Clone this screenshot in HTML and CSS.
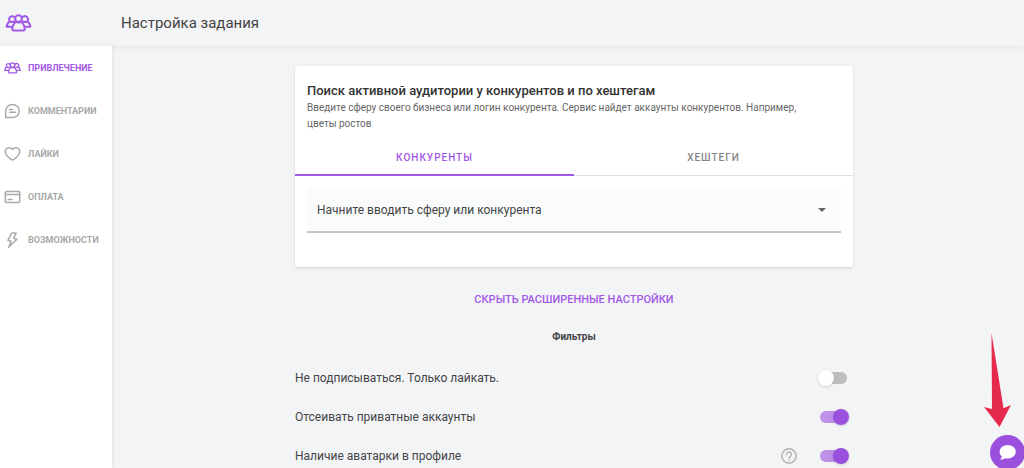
FILE: index.html
```html
<!DOCTYPE html>
<html lang="ru">
<head>
<meta charset="utf-8">
<meta name="viewport" content="width=device-width, initial-scale=1">
<title>Настройка задания</title>
<link rel="stylesheet" href="styles.css">
</head>
<body>
<svg class="sprite" aria-hidden="true">
  <symbol id="people" viewBox="0 0 26 18">
    <circle cx="13" cy="4.600" r="3.400"/>
    <path d="M8.300 16.600c-1.300 0-1.700-.8-1.500-2 .5-3.600 2.200-5.900 4.100-6.700 1.300.8 2.900.8 4.200 0 1.900.8 3.600 3.100 4.100 6.700.2 1.200-.2 2-1.500 2z"/>
    <path d="M9 3.200A2.900 2.900 0 1 0 4.400 7.300C2.700 8.200 1.500 10 1.100 12.700h5.300M17 3.200a2.900 2.900 0 1 1 4.600 4.100c1.700.9 2.900 2.700 3.300 5.400h-5.300M4.400 7.300c1.200.8 2.700.9 4 .2M21.600 7.300c-1.200.8-2.700.9-4 .2"/>
  </symbol>
</svg>
<header class="header">
  <a class="logo" href="#" aria-label="Главная"><svg class="logo-icon"><use href="#people"/></svg></a>
  <h1 class="page-title">Настройка задания</h1>
</header>
<div class="layout">
  <nav class="sidebar">
    <a class="nav-link active" href="#"><svg class="nav-icon"><use href="#people"/></svg>ПРИВЛЕЧЕНИЕ</a>
    <a class="nav-link" href="#"><svg class="nav-icon" viewBox="0 0 16 16"><path d="M1.200 14.600V8A6.800 6.600 0 1 1 8 14.600zM5 6.500h3M5 9.300h6"/></svg>КОММЕНТАРИИ</a>
    <a class="nav-link" href="#"><svg class="nav-icon" viewBox="0 0 16 16"><path d="M8 14.200C6.300 13.200.8 9.300.8 5.500.8 1.700 5.700.3 8 3.500c2.300-3.200 7.200-1.800 7.200 2 0 3.800-5.500 7.700-7.200 8.700z"/></svg>ЛАЙКИ</a>
    <a class="nav-link" href="#"><svg class="nav-icon" viewBox="0 0 16 16"><rect x=".8" y="2.600" width="14.400" height="10.800" rx="1.200"/><path d="M1 5.500h14M3.500 10.500h4"/></svg>ОПЛАТА</a>
    <a class="nav-link" href="#"><svg class="nav-icon" viewBox="0 0 16 16"><path d="M7.300 1 3.400 8.300l3.300.9-2.500 6L12.400 7.300l-3.300-.9L11.600.9z"/></svg>ВОЗМОЖНОСТИ</a>
  </nav>
  <main class="main">
    <section class="card">
      <div class="card-head">
        <h2 class="card-title">Поиск активной аудитории у конкурентов и по хештегам</h2>
        <p class="card-text">Введите сферу своего бизнеса или логин конкурента. Сервис найдет аккаунты конкурентов. Например, цветы ростов</p>
      </div>
      <div class="tabs" role="tablist">
        <button class="tab selected" type="button" role="tab" aria-selected="true">КОНКУРЕНТЫ</button>
        <button class="tab" type="button" role="tab" aria-selected="false">ХЕШТЕГИ</button>
      </div>
      <div class="field">
        <select class="select" aria-label="Сфера или конкурент">
          <option>Начните вводить сферу или конкурента</option>
        </select>
        <svg class="caret" viewBox="0 0 8 4" aria-hidden="true"><path d="M0 0h8L4 4z"/></svg>
      </div>
    </section>
    <button class="toggle-settings" type="button">СКРЫТЬ РАСШИРЕННЫЕ НАСТРОЙКИ</button>
    <h3 class="filters-title">Фильтры</h3>
    <div class="filter">
      <label class="filter-label" for="only-like">Не подписываться. Только лайкать.</label>
      <input class="switch" type="checkbox" id="only-like">
    </div>
    <div class="filter">
      <label class="filter-label" for="private">Отсеивать приватные аккаунты</label>
      <input class="switch" type="checkbox" id="private" checked>
    </div>
    <div class="filter">
      <label class="filter-label" for="avatar">Наличие аватарки в профиле</label>
      <button class="help" type="button" aria-label="Справка"><svg class="help-icon" viewBox="0 0 16 16"><circle cx="8" cy="8" r="7.200"/><path d="M5.600 6.400a2.400 2.400 0 1 1 3.800 1.900C8.500 8.900 8 9.300 8 10.300M8 12.300v.3"/></svg></button>
      <input class="switch" type="checkbox" id="avatar" checked>
    </div>
  </main>
</div>
<svg class="arrow" viewBox="0 0 28 94" aria-hidden="true"><path d="M7.500 0 19.500 75.300 27 72 15.500 94 0 74 8 76z"/></svg>
<button class="chat" type="button" aria-label="Чат"><svg class="chat-icon" viewBox="0 0 16 14"><path d="M8.200 0C3.900 0 .6 2.800.6 6.300c0 1.900.9 3.500 2.300 4.700-.4 1.100-1.200 1.900-2.300 2.500 1.900.3 3.700-.2 5-1.200.8.200 1.700.3 2.600.3 4.300 0 7.600-2.800 7.600-6.300S12.500 0 8.200 0z"/></svg></button>
</body>
</html>
```
FILE: styles.css
```css
* {
  box-sizing: border-box;
}

html {
  height: 100%;
}

body {
  display: flex;
  flex-direction: column;
  height: 100%;
  margin: 0;
  overflow: hidden;
  background: #f3f4f6;
  color: #444446;
  font-family: Roboto, "Liberation Sans", sans-serif;
  font-size: 12px;
}

h1,
h2,
h3,
p {
  margin: 0;
}

button,
select {
  border: 0;
  background: none;
  color: inherit;
  font: inherit;
  cursor: pointer;
}

.sprite {
  position: absolute;
  width: 0;
  height: 0;
}

.header {
  display: flex;
  flex: none;
  align-items: center;
  height: 46px;
  padding: 0 5px;
  box-shadow: 0 0 5px rgba(0, 0, 0, 0.1);
}

.logo {
  display: flex;
  width: 116px;
  color: #a259e6;
}

.logo-icon,
.nav-icon,
.help-icon {
  fill: none;
  stroke: currentColor;
  stroke-width: 1.5;
  stroke-linecap: round;
  stroke-linejoin: round;
}

.logo-icon {
  width: 27px;
  height: 18px;
  stroke-width: 2;
}

.page-title {
  font-size: 15px;
  font-weight: 400;
  line-height: 18px;
}

.layout {
  display: flex;
  flex: 1;
  gap: 12px;
  min-height: 0;
}

.sidebar {
  flex: none;
  width: 112px;
  background: #fff;
  box-shadow: 1px 0 3px rgba(0, 0, 0, 0.08);
}

.nav-link {
  display: flex;
  align-items: center;
  gap: 7px;
  height: 43px;
  padding-left: 4px;
  color: #a9a9a9;
  font-size: 9px;
  font-weight: 700;
  text-decoration: none;
  white-space: nowrap;
}

.nav-link.active {
  color: #a259e6;
}

.nav-icon {
  flex: none;
  width: 17px;
  height: 16px;
}

.nav-link.active .nav-icon {
  stroke-width: 2;
}

.main {
  display: flex;
  flex: 1;
  flex-direction: column;
  max-width: 558px;
  margin: 0 auto;
  padding-top: 20px;
}

.card {
  flex: none;
  padding-bottom: 34px;
  border-radius: 3px;
  background: #fff;
  box-shadow: 0 1px 3px rgba(0, 0, 0, 0.14);
}

.card-head {
  padding: 16px 28px 0 12px;
}

.card-title {
  font-size: 13px;
  font-weight: 500;
  line-height: 18px;
  color: #333;
}

.card-text {
  font-size: 10px;
  line-height: 16px;
  color: #666;
}

.tabs {
  display: flex;
  margin-top: 8px;
  border-bottom: 1px solid #e0e0e2;
}

.tab {
  flex: 1;
  height: 36px;
  margin-bottom: -1px;
  padding: 0;
  border-bottom: 2px solid transparent;
  color: #858585;
  font-size: 10px;
  font-weight: 500;
  letter-spacing: 1px;
}

.tab.selected {
  border-color: #a259e6;
  color: #a259e6;
}

.field {
  position: relative;
  margin: 12px 12px 0;
}

.select {
  display: block;
  width: 100%;
  height: 45px;
  padding: 0 30px 0 10px;
  border-bottom: 2px solid #c4c6c5;
  border-radius: 0;
  background: #fafcfb;
  font-size: 12px;
  appearance: none;
}

.caret {
  position: absolute;
  top: 20px;
  right: 15px;
  width: 8px;
  height: 4px;
  fill: #666;
  pointer-events: none;
}

.toggle-settings {
  align-self: center;
  margin-top: 25px;
  padding: 0;
  color: #a259e6;
  font-size: 11px;
  font-weight: 500;
  line-height: 16px;
}

.filters-title {
  margin: 20px 0 12px;
  font-size: 10px;
  font-weight: 700;
  line-height: 18px;
  text-align: center;
}

.filter {
  display: flex;
  flex: none;
  align-items: center;
  height: 39px;
  padding-right: 4px;
}

.filter-label {
  flex: 1;
}

.help {
  display: flex;
  margin-right: 20px;
  padding: 0;
  color: #b4b4b6;
}

.help-icon {
  width: 16px;
  height: 16px;
}

.switch {
  position: relative;
  width: 32px;
  height: 16px;
  margin: 0;
  appearance: none;
}

.switch::before {
  position: absolute;
  inset: 2px 2px 2px 3px;
  border-radius: 6px;
  background: #bdbdbd;
  content: "";
}

.switch::after {
  position: absolute;
  top: 0;
  left: 1px;
  width: 16px;
  height: 16px;
  border-radius: 50%;
  background: #fff;
  box-shadow: 0 1px 3px rgba(0, 0, 0, 0.15);
  content: "";
}

.switch:checked::before {
  background: #be90e8;
}

.switch:checked::after {
  left: 16px;
  background: #9a50dd;
}

.arrow {
  position: fixed;
  right: 12px;
  bottom: 41px;
  width: 28px;
  height: 94px;
  fill: #e62a4e;
}

.chat {
  position: fixed;
  right: -1px;
  bottom: -2px;
  display: grid;
  width: 35px;
  height: 35px;
  padding: 0;
  border-radius: 50%;
  background: #9a50dd;
  place-items: center;
}

.chat-icon {
  width: 17px;
  height: 15px;
  fill: #fff;
}
```
